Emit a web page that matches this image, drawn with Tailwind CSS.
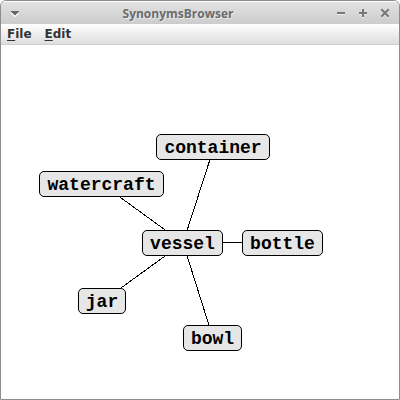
<!DOCTYPE html>
<html lang="en">
<head>
<meta charset="utf-8">
<title>SynonymsBrowser</title>
<script src="https://cdn.jsdelivr.net/npm/@tailwindcss/browser@4"></script>
</head>
<body class="bg-white">
<div class="flex h-screen flex-col overflow-hidden rounded-t-md border border-[#8e8c8e] bg-white">
  <header class="grid h-[23px] shrink-0 grid-cols-[28px_1fr_72px] items-center border-t border-white bg-linear-to-b from-[#e2e2e2] to-[#cccccc] text-[#6b6b6b]">
    <button aria-label="Window menu" class="flex h-[22px] w-7 items-center justify-center">
      <svg class="h-[22px] w-7" viewBox="0 0 28 22" shape-rendering="crispEdges"><path d="M10 11h8v1h-1v1h-1v1h-1v1h-2v-1h-1v-1h-1v-1h-1z" fill="#f2f2f2"/><path d="M10 9h8v1h-1v1h-1v1h-1v1h-2v-1h-1v-1h-1v-1h-1z" fill="#686868"/></svg>
    </button>
    <h1 class="pt-0.5 text-center font-['Open_Sans','Noto_Sans',sans-serif] text-xs font-bold [text-shadow:1px_1px_0_#e8e8e8]">SynonymsBrowser</h1>
    <div class="flex justify-end pr-[3px]">
      <button aria-label="Minimize" class="h-[22px] w-[22px]"><svg class="h-[22px] w-[22px]" viewBox="0 0 22 22" shape-rendering="crispEdges"><path d="M7 12h8v1H7z" fill="#ededed"/><path d="M7 10h8v2H7z" fill="#777"/></svg></button>
      <button aria-label="Maximize" class="h-[22px] w-[22px]"><svg class="h-[22px] w-[22px]" viewBox="0 0 22 22" shape-rendering="crispEdges"><path d="M7 12h8v1h-3v3h-2v-3H7z" fill="#ededed"/><path d="M10 7h2v3h3v2h-3v3h-2v-3H7v-2h3z" fill="#777"/></svg></button>
      <button aria-label="Close" class="h-[22px] w-[22px]"><svg class="h-[22px] w-[22px]" viewBox="0 0 22 22"><path d="M8 9l6 6M14 9l-6 6" stroke="#ededed" stroke-width="2" stroke-linecap="square"/><path d="M8 8l6 6M14 8l-6 6" stroke="#777" stroke-width="2" stroke-linecap="square"/></svg></button>
    </div>
  </header>
  <nav class="flex h-[21px] shrink-0 items-center gap-[13px] border-b border-[#cfcfcf] bg-linear-to-b from-white to-[#dedede] px-1.5 font-['DejaVu_Sans',sans-serif] text-xs font-bold text-[#333]">
    <button class="leading-none"><span class="underline decoration-1 underline-offset-2">F</span>ile</button>
    <button class="leading-none"><span class="underline decoration-1 underline-offset-2">E</span>dit</button>
  </nav>
  <main class="relative min-h-0 flex-1 font-['Courier_10_Pitch','Liberation_Mono',monospace] text-lg leading-[26px] font-bold text-black">
    <svg class="absolute inset-0 h-full w-full" shape-rendering="crispEdges" stroke="#000" stroke-width="1">
      <line x1="182" y1="198" x2="213" y2="102"/>
      <line x1="182" y1="198" x2="101" y2="139"/>
      <line x1="182" y1="197.5" x2="282" y2="197.5"/>
      <line x1="182" y1="198" x2="102" y2="256"/>
      <line x1="182" y1="198" x2="212" y2="293"/>
    </svg>
    <div class="absolute top-[89px] left-[155px] h-[26px] w-[114px] rounded-[5px] border border-black bg-[#e6e6e6] text-center">container</div>
    <div class="absolute top-[126px] left-[38px] h-[26px] w-[125px] rounded-[5px] border border-black bg-[#e6e6e6] text-center">watercraft</div>
    <div class="absolute top-[185px] left-[141px] h-[26px] w-[81px] rounded-[5px] border border-black bg-[#e6e6e6] text-center">vessel</div>
    <div class="absolute top-[185px] left-[241px] h-[26px] w-[81px] rounded-[5px] border border-black bg-[#e6e6e6] text-center">bottle</div>
    <div class="absolute top-[243px] left-[77px] h-[26px] w-[48px] rounded-[5px] border border-black bg-[#e6e6e6] text-center">jar</div>
    <div class="absolute top-[280px] left-[182px] h-[26px] w-[59px] rounded-[5px] border border-black bg-[#e6e6e6] text-center">bowl</div>
  </main>
</div>
</body>
</html>
